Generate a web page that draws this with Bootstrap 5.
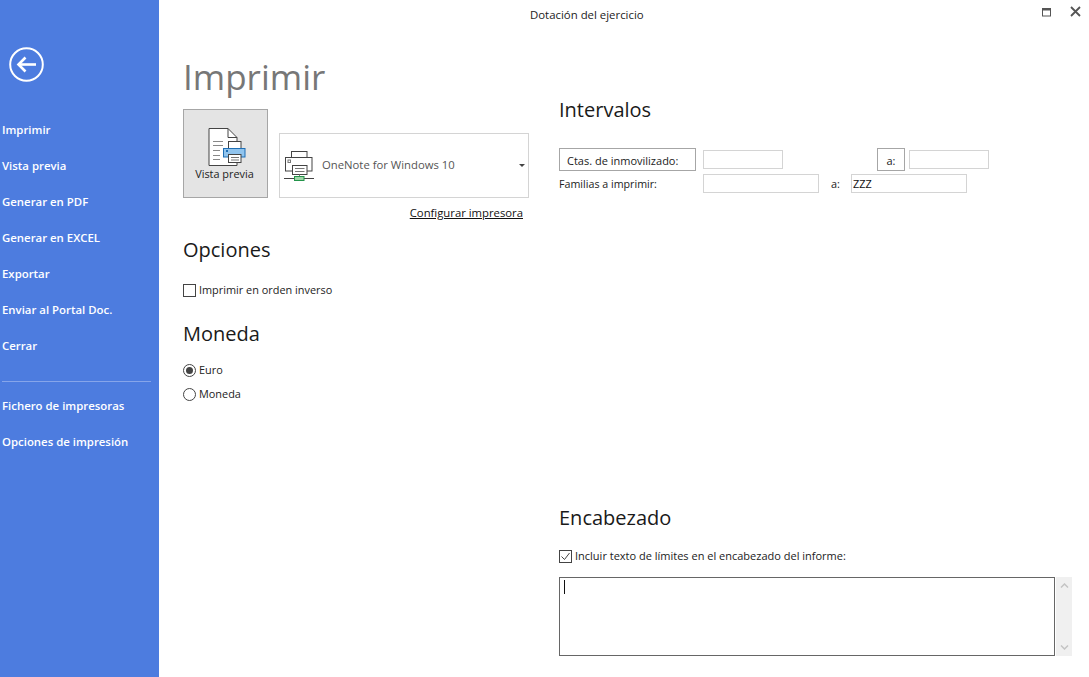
<!DOCTYPE html>
<html lang="es">
  <head>
    <meta charset="utf-8" />
    <title>Dotación del ejercicio</title>
    <link href="https://cdn.jsdelivr.net/npm/bootstrap@5.3.0/dist/css/bootstrap.min.css" rel="stylesheet" />
    <style>
      html, body { height: 100%; overflow: hidden; }
      body { font-family: "Open Sans", "Noto Sans", sans-serif; font-size: 10.9px; color: #222; background: #fff; }
      .app-shell { height: 677px; }

      .side-bar { width: 159px; background: #4d7cdf; color: #fff; flex-shrink: 0; padding-top: 47px; }
      .back-btn { width: 35px; height: 35px; margin-left: 9px; margin-bottom: 30px; display: block; }
      .side-link { display: block; height: 36px; line-height: 36px; padding-left: 2px; color: #fff; font-weight: 600; font-size: 11.4px; text-decoration: none; white-space: nowrap; }
      .side-rule { border-top: 1px solid #86a5ea; margin: 17px 8px 6px 2px; }

      .work-area { width: 930px; }
      .title-row { height: 30px; padding-left: 371px; line-height: 30px; font-size: 11.4px; }
      .win-btns { position: absolute; top: 6px; right: 8px; gap: 18px; }

      .col-left { width: 346px; margin-left: 24px; }
      .col-right { width: 513px; margin-left: 30px; }

      .page-title { font-size: 35px; font-weight: 400; color: #777; line-height: 50px; margin: 22px 0 7px 0; }
      .sec-title { font-size: 20px; font-weight: 400; color: #1a1a1a; line-height: 28px; margin: 0; }

      .preview-btn { width: 85px; height: 89px; background: #e4e4e4; border: 1px solid #a6a6a6; border-radius: 0; padding: 18px 0 0; font-size: 10.9px; color: #222; display: flex; flex-direction: column; align-items: center; line-height: 14px; }
      .preview-icon { margin-left: 3px; margin-bottom: 1px; flex-shrink: 0; }
      .preview-text { margin-right: 2px; }
      .printer-pick { width: 250px; height: 65px; margin-left: 11px; margin-top: 24px; border: 1px solid #d4d4d4; border-radius: 0; background: #fff; padding: 0 0 0 4px; font-size: 11.3px; color: #555; gap: 6px; }
      .pick-caret { width: 0; height: 0; border-left: 3px solid transparent; border-right: 3px solid transparent; border-top: 3px solid #444; margin-left: auto; margin-right: 3px; }
      .config-link { display: block; text-align: right; width: 340px; color: #111; font-size: 11.3px; line-height: 15px; margin-top: 7px; }

      .box-check { width: 13px; height: 13px; border: 1px solid #444; background: #fff; flex-shrink: 0; display: block; }
      .opt-row { height: 24px; gap: 3px; }
      .dot-radio { width: 13px; height: 13px; border: 1px solid #444; border-radius: 50%; flex-shrink: 0; display: flex; align-items: center; justify-content: center; }
      .dot-radio.on::after { content: ""; width: 7px; height: 7px; border-radius: 50%; background: #444; }

      .range-btn { height: 23px; border: 1px solid #a6a6a6; border-radius: 0; background: #fff; padding: 1px 0 0; font-size: 11px; color: #222; line-height: 21px; text-align: center; }
      .plain-input { height: 19px; border: 1px solid #d4d4d4; border-radius: 0; padding: 0 1px; font-size: 10.9px; line-height: 15px; color: #111; box-shadow: none; min-height: 0; }
      .memo-box { width: 497px; height: 79px; border: 1px solid #666; padding: 2px 4px; }
      .memo-caret { display: block; width: 1px; height: 14px; background: #111; }
      .memo-scroll { width: 16px; height: 79px; margin-left: 1px; background: #f0f0f0; padding: 6px 0; }

      .opciones-head { margin-top: 16px; margin-bottom: 14px; }
      .moneda-head { margin-top: 18px; margin-bottom: 10px; }
      .intervals-head { margin-top: 66px; margin-bottom: 24px; }
      .ctas-btn { width: 137px; text-align: left; padding-left: 7px; }
      .ms-gap { margin-left: 7px; }
      .w-80 { width: 80px; flex: none; }
      .w-116 { width: 116px; flex: none; }
      .a-btn { width: 28px; margin-left: 94px; }
      .a-input { margin-left: 4px; }
      .range-one { height: 23px; }
      .range-two { height: 19px; margin-top: 3px; }
      .fam-label { width: 144px; padding-top: 2px; font-size: 10.7px; }
      .fam-a { width: 32px; padding-left: 12px; padding-top: 2px; }
      .encab-head { margin-top: 311px; margin-bottom: 12px; }
      .encab-check { font-size: 11px; }
      .memo-wrap { margin-top: 9px; }
    </style>
  </head>
  <body>
    <div class="app-shell d-flex position-relative">
      <nav class="side-bar">
        <svg class="back-btn" viewBox="0 0 35 35" fill="none" stroke="#fff">
          <circle cx="17.5" cy="17.5" r="16.3" stroke-width="2" />
          <path d="M9.5 17.5H27" stroke-width="2.6" />
          <path d="M16.5 10.5L9.5 17.5L16.5 24.5" stroke-width="2.6" />
        </svg>
        <a class="side-link" href="#">Imprimir</a>
        <a class="side-link" href="#">Vista previa</a>
        <a class="side-link" href="#">Generar en PDF</a>
        <a class="side-link" href="#">Generar en EXCEL</a>
        <a class="side-link" href="#">Exportar</a>
        <a class="side-link" href="#">Enviar al Portal Doc.</a>
        <a class="side-link" href="#">Cerrar</a>
        <div class="side-rule"></div>
        <a class="side-link" href="#">Fichero de impresoras</a>
        <a class="side-link" href="#">Opciones de impresión</a>
      </nav>

      <main class="work-area">
        <div class="title-row">Dotación del ejercicio</div>
        <div class="win-btns d-flex align-items-center">
          <svg width="10" height="10" viewBox="0 0 10 10" fill="none" stroke="#555"><rect x="0.5" y="1.5" width="8" height="7.5" /><path d="M0.5 2.5H8.5" stroke-width="2" /></svg>
          <svg width="11" height="11" viewBox="0 0 11 11" fill="none" stroke="#555" stroke-width="1.8"><path d="M1 1L10 10M10 1L1 10" /></svg>
        </div>

        <div class="d-flex">
          <section class="col-left">
            <h1 class="page-title">Imprimir</h1>
            <div class="d-flex align-items-start">
              <button class="btn preview-btn" type="button">
                <svg class="preview-icon" width="38" height="38" viewBox="0 0 38 38" fill="none" stroke="#444">
                  <path d="M1 .5H20L29 9.5V37.5H1Z" fill="#fff" />
                  <path d="M20 .5V9.5H29" />
                  <path d="M5 13.5H15M5 17.5H15M5 22.5H12M5 27.5H12M5 31.5H12" stroke="#888" />
                  <rect x="20.5" y="13.5" width="12.5" height="8" fill="#fff" />
                  <rect x="15.5" y="20.5" width="21.5" height="8.5" fill="#90c4ee" stroke="#1f6fb5" />
                  <rect x="18" y="22" width="2" height="2" fill="#1f6fb5" stroke="none" />
                  <rect x="20.5" y="26.5" width="12.5" height="8" fill="#fff" />
                  <path d="M23 29.5H31M23 32H31" stroke="#777" />
                </svg>
                <span class="preview-text">Vista previa</span>
              </button>
              <button class="btn printer-pick d-flex align-items-center" type="button">
                <svg width="32" height="32" viewBox="0 0 32 32" fill="none" stroke="#444">
                  <rect x="7.5" y="1.5" width="15.5" height="6" fill="#fff" />
                  <rect x="1.5" y="7.5" width="26.5" height="13.5" fill="#fff" />
                  <rect x="4" y="10" width="2.5" height="2.5" stroke="#777" />
                  <rect x="8.5" y="15.5" width="14.5" height="9" fill="#fff" />
                  <path d="M11 18.5H20.5M11 21.5H20.5" stroke="#777" />
                  <path d="M15.5 24.5V26.5" stroke="#777" />
                  <path d="M0 28.5H30" />
                  <rect x="10.5" y="26.5" width="9.5" height="4" fill="#9ed5a6" stroke="#23944a" />
                </svg>
                <span>OneNote for Windows 10</span>
                <span class="pick-caret"></span>
              </button>
            </div>
            <a class="config-link" href="#">Configurar impresora</a>

            <h2 class="sec-title opciones-head">Opciones</h2>
            <label class="opt-row d-flex align-items-center"><span class="box-check"></span>Imprimir en orden inverso</label>

            <h2 class="sec-title moneda-head">Moneda</h2>
            <label class="opt-row d-flex align-items-center"><span class="dot-radio on"></span>Euro</label>
            <label class="opt-row d-flex align-items-center"><span class="dot-radio"></span>Moneda</label>
          </section>

          <section class="col-right">
            <h2 class="sec-title intervals-head">Intervalos</h2>
            <div class="d-flex align-items-center range-one">
              <button class="btn range-btn ctas-btn" type="button">Ctas. de inmovilizado:</button>
              <input class="form-control plain-input w-80 ms-gap" type="text" />
              <button class="btn range-btn a-btn" type="button">a:</button>
              <input class="form-control plain-input w-80 a-input" type="text" />
            </div>
            <div class="d-flex align-items-center range-two">
              <span class="fam-label">Familias a imprimir:</span>
              <input class="form-control plain-input w-116" type="text" />
              <span class="fam-a">a:</span>
              <input class="form-control plain-input w-116" type="text" value="ZZZ" />
            </div>

            <h2 class="sec-title encab-head">Encabezado</h2>
            <label class="opt-row d-flex align-items-center encab-check">
              <svg width="13" height="13" viewBox="0 0 13 13" fill="none" stroke="#444"><rect x="0.5" y="0.5" width="12" height="12" /><path d="M2.5 6.5L5.5 9.5L10.5 3" /></svg>
              Incluir texto de límites en el encabezado del informe:
            </label>
            <div class="d-flex memo-wrap">
              <div class="memo-box"><span class="memo-caret"></span></div>
              <div class="memo-scroll d-flex flex-column justify-content-between align-items-center">
                <svg width="9" height="5" viewBox="0 0 9 5" fill="none" stroke="#c4c4c4" stroke-width="1.5"><path d="M1 4.5L4.5 1L8 4.5" /></svg>
                <svg width="9" height="5" viewBox="0 0 9 5" fill="none" stroke="#c4c4c4" stroke-width="1.5"><path d="M1 0.5L4.5 4L8 0.5" /></svg>
              </div>
            </div>
          </section>
        </div>
      </main>
    </div>
    <script src="https://cdn.jsdelivr.net/npm/bootstrap@5.3.0/dist/js/bootstrap.bundle.min.js"></script>
  </body>
</html>
